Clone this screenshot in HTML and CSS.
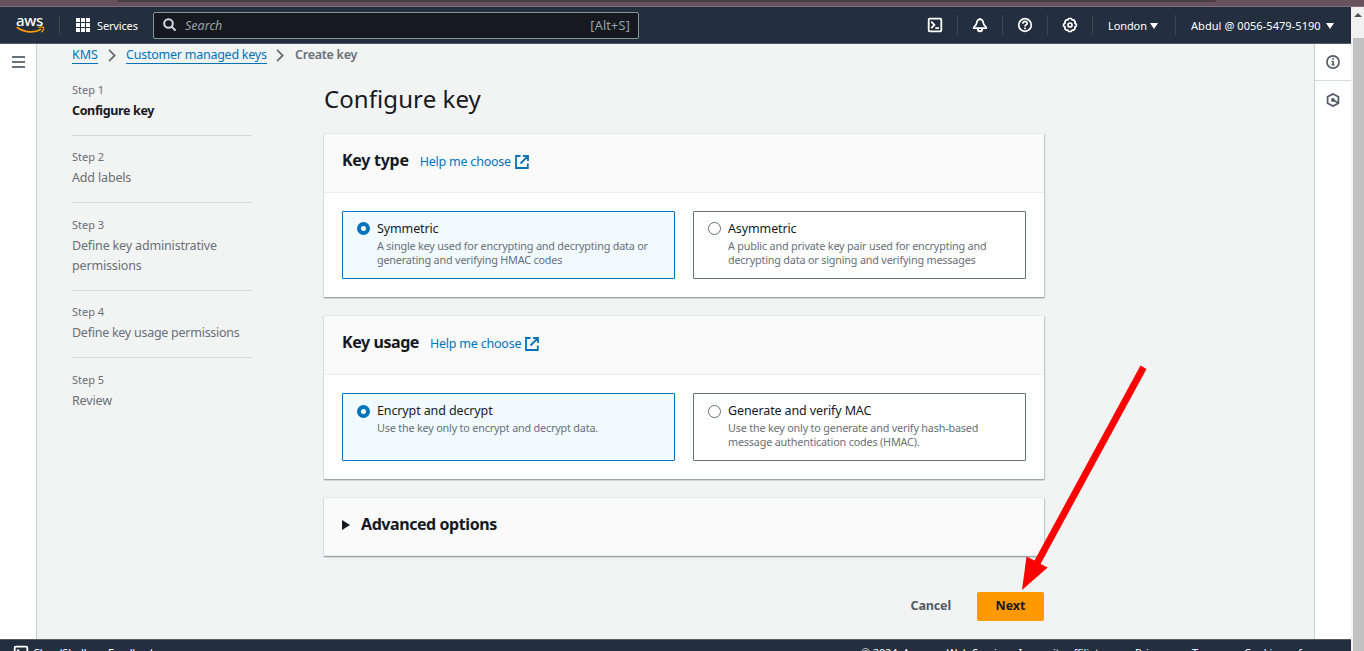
FILE: index.html
```
<!DOCTYPE html>
<html lang="en">
<head>
<meta charset="utf-8">
<title>Create key</title>
<link rel="stylesheet" href="styles.css">
</head>
<body>
<div class="browser-strip"><div class="browser-field"></div></div>
<div class="viewport">
  <div class="console">
    <header class="topbar">
      <div class="logo">
        <span class="logo-text">aws</span>
        <svg class="smile" width="29" height="9" viewBox="0 0 29 9"><path d="M0.8 1.3C8.500 7 18.500 7.200 25 3.300" fill="none" stroke="#ff9900" stroke-width="1.700"/><path d="M22.300 1.700C24.500 .9 27 .9 27.500 1.500C27.900 2.600 27 4.800 25.500 6.200" fill="none" stroke="#ff9900" stroke-width="1.300"/></svg>
      </div>
      <i class="sep sep-logo"></i>
      <svg class="grid-icon" width="14" height="14" viewBox="0 0 14 14" fill="#fff"><path d="M0 0h4v4H0zM5 0h4v4h-4zM10 0h4v4h-4zM0 5h4v4H0zM5 5h4v4h-4zM10 5h4v4h-4zM0 10h4v4H0zM5 10h4v4h-4zM10 10h4v4h-4z"/><path d="M4.500 0v14M9.500 0v14M0 4.500h14M0 9.500h14" stroke="#232f3e"/></svg>
      <span class="services">Services</span>
      <div class="search">
        <svg width="14" height="14" viewBox="0 0 14 14" fill="none" stroke="#d5dbdb" stroke-width="2"><circle cx="5.500" cy="5.500" r="4.300"/><path d="M8.600 8.600l4 4"/></svg>
        <span class="placeholder">Search</span>
        <span class="shortcut">[Alt+S]</span>
      </div>
      <div class="tools">
        <div class="tool"><svg width="16" height="16" viewBox="0 0 16 16" fill="none" stroke="#fff" stroke-width="1.800"><rect x="1.700" y="1.700" width="12.600" height="12.600" rx="1"/><path d="M4.300 4.700L7.400 8l-3.100 3.200M8.300 11.200h3.700"/></svg></div>
        <div class="tool"><svg width="16" height="16" viewBox="0 0 16 16" fill="none" stroke="#fff" stroke-width="1.800" stroke-linejoin="round"><path d="M8 1v1.500M8 2.300C6 2.300 5 3.600 4.900 5.300C4.800 7.500 4.200 8.300 1.800 10.400v.8h12.400v-.8C11.800 8.300 11.200 7.500 11.100 5.300C11 3.600 10 2.300 8 2.300zM5.800 11.500v.7c0 2.700 4.400 2.700 4.400 0v-.7"/></svg></div>
        <div class="tool"><svg width="16" height="16" viewBox="0 0 16 16" fill="none" stroke="#fff" stroke-width="1.700"><circle cx="8" cy="8" r="6.300"/><path d="M5.800 6.700C5.800 3.600 10.300 3.900 10.200 6.500C10.200 8 8 7.700 8 9.600M8 10.600v1.600"/></svg></div>
        <div class="tool"><svg width="16" height="16" viewBox="0 0 16 16" fill="none" stroke="#fff" stroke-width="1.700" stroke-linejoin="round"><path d="M6.600 1.500h2.800l.7 1.500 1.600-.1 1.500 1.800-.4 1.600 1.500.9v1.900l-1.500.8.3 1.700-1.500 1.600-1.500-.1-.9 1.400H6.700l-.8-1.400-1.600.1-1.500-1.600.3-1.700-1.500-.8V7.200l1.500-.9-.3-1.600 1.500-1.800 1.600.1z"/><circle cx="8" cy="8" r="2"/></svg></div>
        <div class="menu region"><span class="region-name">London</span><i class="caret"></i></div>
        <div class="menu account"><span class="account-name">Abdul @ 0056-5479-5190</span><i class="caret"></i></div>
      </div>
    </header>
    <div class="body">
      <aside class="left-rail"><i class="bar"></i><i class="bar"></i><i class="bar"></i></aside>
      <main class="content">
        <nav class="crumbs">
          <a class="crumb c-kms">KMS</a>
          <svg class="chev" width="8" height="13" viewBox="0 0 8 13"><path d="M1 .8l5.700 5.700L1 12.200" fill="none" stroke="#687078" stroke-width="1.800"/></svg>
          <a class="crumb c-keys">Customer managed keys</a>
          <svg class="chev" width="8" height="13" viewBox="0 0 8 13"><path d="M1 .8l5.700 5.700L1 12.200" fill="none" stroke="#687078" stroke-width="1.800"/></svg>
          <span class="current">Create key</span>
        </nav>
        <div class="wizard">
          <ol class="steps">
            <li class="step active"><div class="num">Step 1</div><div class="name">Configure key</div></li>
            <li class="step"><div class="num">Step 2</div><div class="name">Add labels</div></li>
            <li class="step"><div class="num">Step 3</div><div class="name">Define key administrative permissions</div></li>
            <li class="step tight"><div class="num">Step 4</div><div class="name">Define key usage permissions</div></li>
            <li class="step"><div class="num">Step 5</div><div class="name">Review</div></li>
          </ol>
          <section class="form">
            <h1 class="title">Configure key</h1>
            <div class="panel">
              <div class="panel-head"><h2 class="panel-title">Key type</h2><a class="help">Help me choose</a><svg class="ext" width="14" height="14" viewBox="0 0 14 14" fill="none" stroke="#0073bb" stroke-width="1.800"><path d="M5.500 1H1v12h11.800V8.500M8 1h5v5M12.800 1.200L5.500 8.500"/></svg></div>
              <div class="tiles">
                <div class="tile on"><i class="radio"></i><div><div class="label">Symmetric</div><div class="desc">A single key used for encrypting and decrypting data or<br>generating and verifying HMAC codes</div></div></div>
                <div class="tile"><i class="radio"></i><div><div class="label">Asymmetric</div><div class="desc">A public and private key pair used for encrypting and<br>decrypting data or signing and verifying messages</div></div></div>
              </div>
            </div>
            <div class="panel">
              <div class="panel-head"><h2 class="panel-title usage">Key usage</h2><a class="help">Help me choose</a><svg class="ext" width="14" height="14" viewBox="0 0 14 14" fill="none" stroke="#0073bb" stroke-width="1.800"><path d="M5.500 1H1v12h11.800V8.500M8 1h5v5M12.800 1.200L5.500 8.500"/></svg></div>
              <div class="tiles">
                <div class="tile on low"><i class="radio"></i><div><div class="label">Encrypt and decrypt</div><div class="desc">Use the key only to encrypt and decrypt data.</div></div></div>
                <div class="tile low"><i class="radio"></i><div><div class="label">Generate and verify MAC</div><div class="desc">Use the key only to generate and verify hash-based<br>message authentication codes (HMAC).</div></div></div>
              </div>
            </div>
            <div class="panel advanced">
              <div class="panel-head"><i class="expander"></i><h2 class="panel-title">Advanced options</h2></div>
            </div>
            <div class="actions"><span class="cancel">Cancel</span><span class="next">Next</span></div>
          </section>
        </div>
      </main>
      <aside class="right-rail">
        <div class="rail-btn"><svg width="14" height="14" viewBox="0 0 15 15"><circle cx="7.500" cy="7.500" r="6.500" fill="none" stroke="#545b64" stroke-width="1.800"/><path d="M6.500 3.500h2v1.700h-2zM5.700 6.300h2.800v3.800h1v1.200H5.500v-1.200h1.200V7.500h-1z" fill="#545b64"/></svg></div>
        <div class="rail-btn last"><svg width="14" height="14" viewBox="0 0 15 15"><path d="M7.500 1l5.800 3.100v6.800L7.500 14l-5.800-3.100V4.100z" fill="none" stroke="#545b64" stroke-width="1.900"/><circle cx="7.400" cy="7.500" r="2.100" fill="#545b64"/><path d="M7.500 7.500l5.500 3" stroke="#545b64" stroke-width="1.900"/></svg></div>
      </aside>
    </div>
    <footer class="footer">
      <svg class="shell" width="16" height="16" viewBox="0 0 16 16" fill="none" stroke="#fff" stroke-width="1.800"><rect x="1.700" y="1.700" width="12.600" height="12.600" rx="1"/><path d="M4.300 4.700L7.400 8l-3.100 3.200"/></svg>
      <span class="f-shell">CloudShell</span><span class="f-feedback">Feedback</span>
      <span class="f-copy">© 2024, Amazon Web Services, Inc. or its affiliates.</span>
      <span class="f-privacy">Privacy</span><span class="f-terms">Terms</span><span class="f-cookie">Cookie preferences</span>
    </footer>
  </div>
  <div class="scrollbar"><i class="scroll-up"></i><div class="thumb"></div></div>
</div>
<svg class="arrow" width="130" height="230" viewBox="1020 362 130 230"><path d="M1140.500 365.500L1146.500 369L1040.500 564L1047.700 567.500L1022 590L1026.500 556.500L1034.500 560.500Z" fill="#f00"/></svg>
</body>
</html>
```
FILE: styles.css
```
* { box-sizing: border-box; }
body { margin: 0; width: 1364px; height: 651px; overflow: hidden; font-family: "Noto Sans", "Open Sans", sans-serif; font-size: 12.5px; color: #16191f; background: #f2f3f3; position: relative; white-space: nowrap; }
svg { display: block; flex: none; }
i { display: block; flex: none; }
h1, h2, ol { margin: 0; padding: 0; }
.browser-strip { height: 7px; background: #65525d; border-bottom: 1px solid #826e79; }
.browser-field { width: 1099px; height: 2px; margin-left: 117px; background: #493d46; border-radius: 0 0 6px 6px; }
.viewport { display: flex; height: 644px; }
.console { width: 1351px; display: flex; flex-direction: column; }
.topbar { height: 37px; flex: none; display: flex; align-items: center; background: #232f3e; border-bottom: 1px solid #545b64; color: #fff; }
.logo { width: 29px; margin-left: 16px; height: 20px; }
.logo-text { display: block; font-size: 15px; line-height: 14px; height: 12px; font-weight: 500; letter-spacing: -.3px; margin-top: -2px; }
.smile { margin-top: 1px; }
.sep { width: 1px; height: 20px; background: #414750; }
.sep-logo { margin-left: 14px; }
.grid-icon { margin-left: 16px; }
.services { font-size: 11px; width: 41px; margin-left: 7px; letter-spacing: -.15px; }
.search { width: 486px; height: 27px; margin-left: 15px; border: 1px solid #879596; border-radius: 2px; background: #16191f; display: flex; align-items: center; padding: 0 8px 0 10px; color: #95a5a6; }
.search svg { margin-left: -1px; }
.placeholder { font-style: italic; margin-left: 8px; font-size: 12.5px; }
.shortcut { margin-left: auto; font-size: 12.5px; letter-spacing: .25px; }
.tools { margin-left: auto; display: flex; align-items: center; font-size: 11px; }
.tool { width: 45px; height: 20px; display: flex; align-items: center; justify-content: center; border-right: 1px solid #414750; }
.menu { display: flex; align-items: center; height: 20px; padding-left: 15px; }
.region { width: 83px; border-right: 1px solid #414750; }
.account { width: 175px; }
.region-name { width: 38px; letter-spacing: -.1px; }
.account-name { width: 131px; letter-spacing: .06px; }
.caret { border: 4px solid transparent; border-top: 6px solid #fff; border-bottom: 0; margin-left: 5px; margin-top: 1px; }
.region .caret { margin-left: 4px; }
.account .caret { margin-left: 4px; }
.body { display: flex; height: 596px; background: #f2f3f3; }
.left-rail { width: 37px; background: #fff; border-right: 1px solid #c8ced2; padding: 12px 0 0 12px; }
.bar { width: 13px; height: 2px; background: #687078; margin-bottom: 3px; }
.content { width: 1277px; padding: 0 0 0 35px; }
.crumbs { display: flex; align-items: center; height: 22px; color: #687078; }
.crumb { color: #0073bb; border-bottom: 1px solid #0073bb; line-height: 17px; height: 18px; }
.c-kms { width: 26px; margin-right: 10px; letter-spacing: -.1px; }
.c-keys { width: 141px; margin: 0 9px 0 10px; letter-spacing: -.24px; }
.current { margin-left: 11px; font-weight: 600; line-height: 18px; letter-spacing: -.26px; }
.wizard { display: flex; }
.steps { width: 180px; margin-top: 16px; list-style: none; color: #687078; }
.step { border-bottom: 1px solid #d5dbdb; padding-bottom: 14px; margin-bottom: 13.4px; }
.step:last-child { border: 0; }
.num { font-size: 11px; line-height: 16px; }
.name { line-height: 20px; margin-top: 3px; font-size: 12.5px; white-space: normal; letter-spacing: -.16px; }
.active .name { color: #16191f; font-weight: 700; letter-spacing: -.36px; }
.tight .name { letter-spacing: -.26px; }
.form { width: 720px; margin-left: 72px; padding-top: 16px; }
.title { font-size: 24px; font-weight: 400; line-height: 34px; height: 52px; letter-spacing: .08px; }
.panel { background: #fff; height: 163px; margin-bottom: 19px; box-shadow: 0 0 0 .5px #d5dbdb, 0 1px 1px #687078, 1px 1px 1px #c0c6ca; }
.panel-head { height: 59px; padding: 0 18px 6px; background: #fafafa; border-bottom: 1px solid #eaeded; display: flex; align-items: center; }
.panel-title { font-size: 16px; line-height: 22px; font-weight: 700; letter-spacing: -.28px; }
.usage, .advanced .panel-title { letter-spacing: -.43px; }
.help { margin: 3px 0 0 11px; color: #0073bb; line-height: 18px; letter-spacing: -.22px; }
.ext { margin: 4px 0 0 4px; }
.tiles { display: flex; gap: 18px; padding: 18px; }
.tile { width: 333px; height: 68px; border: 1px solid #687078; border-radius: 1px; display: flex; padding: 8px 14px; }
.on { border-color: #0073bb; background: #f1faff; }
.radio { width: 13px; height: 13px; border: 1px solid #687078; border-radius: 50%; background: #fff; margin: 2px 7px 0 0; }
.low .radio { margin-top: 3px; }
.on .radio { border: 4px solid #0073bb; }
.label { line-height: 18px; font-size: 12.5px; letter-spacing: -.12px; }
.desc { font-size: 10.8px; line-height: 14px; color: #687078; margin-top: 1px; letter-spacing: -.18px; }
.panel.advanced { height: 58px; margin-bottom: 36px; }
.advanced .panel-head { height: 58px; }
.expander { border: 5px solid transparent; border-left: 8px solid #16191f; border-right: 0; margin: 2px 11px 0 0; }
.actions { display: flex; justify-content: flex-end; align-items: flex-start; font-weight: 700; line-height: 27px; }
.cancel { color: #545b64; margin-right: 26px; letter-spacing: -.15px; }
.next { width: 67px; height: 29px; text-align: center; background: #ff9900; border-radius: 2px; }
.right-rail { width: 37px; background: #fff; border-left: 1px solid #c8ced2; }
.rail-btn { height: 37px; border-bottom: 1px solid #d5dbdb; display: flex; align-items: center; justify-content: center; }
.rail-btn.last { border: 0; }
.footer { height: 12px; overflow: hidden; display: flex; align-items: flex-start; background: #232f3e; border-top: 1px solid #545b64; color: #fff; font-size: 11px; line-height: 15px; padding-top: 5px; letter-spacing: -.14px; }
.shell { margin: 0 0 0 13px; }
.f-shell { width: 57px; margin-left: 4px; }
.f-feedback { width: 50px; margin-left: 18px; }
.f-copy { margin-left: auto; width: 257px; }
.f-privacy { width: 38px; margin-left: 17px; }
.f-terms { width: 34px; margin-left: 19px; }
.f-cookie { width: 107px; margin-left: 18px; }
.scrollbar { width: 13px; background: #f1f1f1; padding-left: 2px; }
.scroll-up { border: 4px solid transparent; border-bottom: 4px solid #505050; border-top: 0; margin: 6px 0 0 1px; width: 8px; }
.thumb { margin-top: 21px; height: 620px; background: #c1c1c1; }
.arrow { position: absolute; left: 1020px; top: 362px; }
```
